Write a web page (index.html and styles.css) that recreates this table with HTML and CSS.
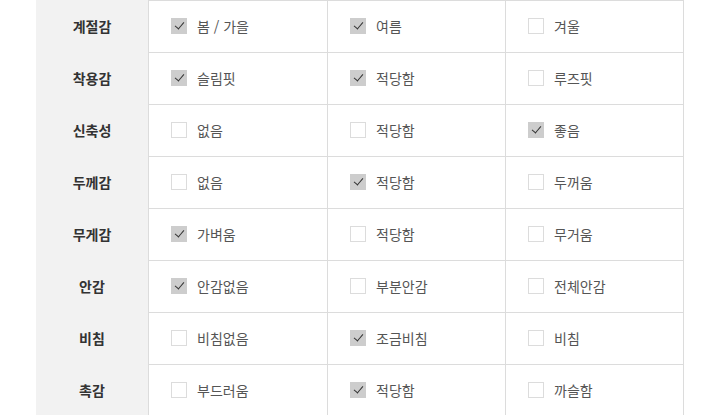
FILE: index.html
```html
<!DOCTYPE html>
<html lang="ko">
<head>
<meta charset="utf-8">
<link rel="stylesheet" href="styles.css">
</head>
<body>
<div class="spec">
  <div class="label">계절감</div>
  <div class="opt first top"><span class="box on"></span>봄 / 가을</div>
  <div class="opt top"><span class="box on"></span>여름</div>
  <div class="opt last top"><span class="box"></span>겨울</div>

  <div class="label">착용감</div>
  <div class="opt first"><span class="box on"></span>슬림핏</div>
  <div class="opt"><span class="box on"></span>적당함</div>
  <div class="opt last"><span class="box"></span>루즈핏</div>

  <div class="label">신축성</div>
  <div class="opt first"><span class="box"></span>없음</div>
  <div class="opt"><span class="box"></span>적당함</div>
  <div class="opt last"><span class="box on"></span>좋음</div>

  <div class="label">두께감</div>
  <div class="opt first"><span class="box"></span>없음</div>
  <div class="opt"><span class="box on"></span>적당함</div>
  <div class="opt last"><span class="box"></span>두꺼움</div>

  <div class="label">무게감</div>
  <div class="opt first"><span class="box on"></span>가벼움</div>
  <div class="opt"><span class="box"></span>적당함</div>
  <div class="opt last"><span class="box"></span>무거움</div>

  <div class="label">안감</div>
  <div class="opt first"><span class="box on"></span>안감없음</div>
  <div class="opt"><span class="box"></span>부분안감</div>
  <div class="opt last"><span class="box"></span>전체안감</div>

  <div class="label">비침</div>
  <div class="opt first"><span class="box"></span>비침없음</div>
  <div class="opt"><span class="box on"></span>조금비침</div>
  <div class="opt last"><span class="box"></span>비침</div>

  <div class="label">촉감</div>
  <div class="opt first"><span class="box"></span>부드러움</div>
  <div class="opt"><span class="box on"></span>적당함</div>
  <div class="opt last"><span class="box"></span>까슬함</div>
</div>
</body>
</html>
```
FILE: styles.css
```css
html, body {
  margin: 0;
  padding: 0;
  background: #fff;
}
body {
  font-family: "Noto Sans CJK KR", "Noto Sans", sans-serif;
  font-size: 14px;
}
.spec {
  margin-left: 36px;
  width: 648px;
  display: grid;
  grid-template-columns: 112px 179px 178px 179px;
}
.label {
  background: #f2f2f2;
  display: flex;
  align-items: center;
  justify-content: center;
  font-weight: 700;
  color: #333;
  font-size: 14px;
  padding-bottom: 2px;
}
.opt {
  height: 49px;
  padding-bottom: 2px;
  border-left: 1px solid #dcdcdc;
  border-bottom: 1px solid #dcdcdc;
  display: flex;
  align-items: center;
  padding-left: 22px;
  color: #555;
  gap: 10px;
  box-sizing: content-box;
}
.opt.top {
  border-top: 1px solid #dcdcdc;
}
.opt.last {
  border-right: 1px solid #dcdcdc;
}
.box {
  width: 14px;
  height: 14px;
  border: 1px solid #dcdcdc;
  background: #fff;
  flex: none;
  position: relative;
}
.box.on {
  background: #cdcdcd;
  border-color: #cdcdcd;
}
.box.on::after {
  content: "";
  position: absolute;
  left: 4.5px;
  top: 1px;
  width: 4px;
  height: 8px;
  border-right: 1.5px solid #333;
  border-bottom: 1.5px solid #333;
  transform: rotate(40deg);
}
```
